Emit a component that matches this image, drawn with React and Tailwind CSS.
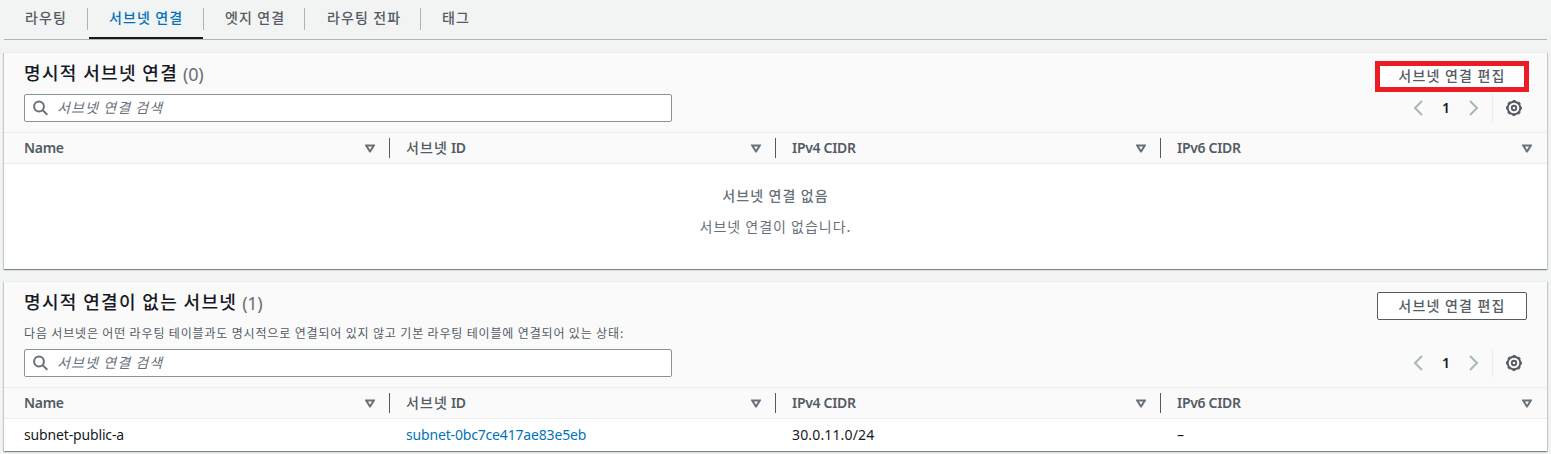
import React from 'react';

const tabs = [
  { label: '라우팅', box: 'w-[84px] pl-[21px]' },
  { label: '서브넷 연결', box: 'w-[116px] pl-[21px]', active: true },
  { label: '엣지 연결', box: 'w-[101px] pl-[21px]' },
  { label: '라우팅 전파', box: 'w-[116px] pl-[22px]' },
  { label: '태그', box: 'w-[70px] pl-[21px]', last: true },
];

const columns = [
  { ko: '', en: 'Name', box: 'w-[386px] pl-5', edge: true },
  { ko: '서브넷', en: 'ID', box: 'w-[386px] pl-4', edge: true },
  { ko: '', en: 'IPv4 CIDR', box: 'w-[385px] pl-4', edge: true },
  { ko: '', en: 'IPv6 CIDR', box: 'w-[386px] pl-4', edge: false },
];

function Tabs() {
  return (
    <nav className="ml-1 flex h-10 w-[1543px] border-b border-[#aab7b8] text-[14px] font-medium tracking-[1.1px] text-[#545b64]">
      {tabs.map((t) => (
        <div key={t.label} className={`relative flex shrink-0 items-start ${t.box}`}>
          <span className={`mt-[7px] leading-[20px] whitespace-nowrap ${t.active ? 'text-[#0073bb]' : ''}`}>{t.label}</span>
          {!t.last && <span className="absolute top-2 right-0 h-[22px] w-px bg-[#aab7b8]" />}
          {t.active && <span className="absolute right-px bottom-0 left-px h-[2px] bg-[#16191f]" />}
        </div>
      ))}
    </nav>
  );
}

function SearchBox() {
  return (
    <div className="flex h-7 w-[648px] items-center rounded-[2px] border border-[#879596] bg-white pl-2">
      <svg width="16" height="16" viewBox="0 0 16 16" fill="none" stroke="#687078" strokeWidth="2">
        <circle cx="6" cy="6.500" r="4.900" />
        <path d="M9.600 10.100 14.300 14.800" />
      </svg>
      <span className="mb-[2px] ml-2 text-[14px] leading-[20px] tracking-[1.1px] text-[#687078] italic">서브넷 연결 검색</span>
    </div>
  );
}

function Pager() {
  return (
    <div className="flex h-7 items-center text-[#aab7b8]">
      <svg width="10" height="16" viewBox="0 0 10 16" fill="none" stroke="currentColor" strokeWidth="2">
        <path d="M9 1 2 8l7 7" />
      </svg>
      <span className="mb-[2px] ml-[18px] w-[10px] text-center font-['Noto_Sans'] text-[14px] font-semibold text-[#16191f]">1</span>
      <svg className="ml-[18px]" width="10" height="16" viewBox="0 0 10 16" fill="none" stroke="currentColor" strokeWidth="2">
        <path d="m1 1 7 7-7 7" />
      </svg>
      <span className="ml-[13px] h-7 w-px bg-[#eaeded]" />
      <svg className="ml-[13px]" width="16" height="16" viewBox="0 0 16 16" fill="none" stroke="#545b64">
        <circle cx="8" cy="8" r="2.200" strokeWidth="1.900" />
        <circle cx="8" cy="8" r="6.300" strokeWidth="1.900" />
        <circle cx="8" cy="8" r="7.400" strokeWidth="1.200" strokeDasharray="3 2.812" strokeDashoffset="1.500" />
      </svg>
    </div>
  );
}

function HeaderRow() {
  return (
    <div className="flex h-[31px] border-b border-[#eaeded] bg-[#fafafa]">
      {columns.map((c) => (
        <div key={c.en} className={`flex shrink-0 items-center ${c.box}`}>
          {c.ko && <span className="mr-[3px] mb-px text-[14px] font-medium tracking-[1.1px] text-[#545b64]">{c.ko}</span>}
          <span className="mb-[2px] font-['Noto_Sans'] text-[14px] font-semibold tracking-[-0.3px] whitespace-nowrap text-[#545b64]">{c.en}</span>
          <svg className={`ml-auto ${c.edge ? 'mr-[14px]' : 'mr-[15px]'}`} width="10" height="9" viewBox="0 0 10 9" fill="#687078">
            <path fillRule="evenodd" d="M0 .5h10v1L5.600 8.500H4.400L0 1.500zM3 2.500 5 5.800l2-3.300z" />
          </svg>
          {c.edge && <span className="h-5 w-px bg-[#545b64]" />}
        </div>
      ))}
    </div>
  );
}

function Panel({ title, count, description, highlighted, className, children }) {
  return (
    <section className={`ml-1 w-[1543px] border-t border-t-[#eaeded] bg-white shadow-[0_1px_1px_0_rgba(0,28,36,0.3),1px_1px_1px_0_rgba(0,28,36,0.15),-1px_1px_1px_0_rgba(0,28,36,0.15)] ${className}`}>
      <header className={`border-b border-[#eaeded] bg-[#fafafa] pl-5 ${description ? 'h-[106px]' : 'h-[80px]'}`}>
        <div className={`flex items-start justify-between ${description ? 'h-[67px]' : 'h-[41px]'}`}>
          <div className="flex flex-col">
            <h2 className="mt-[7px] flex h-6 items-center text-[18px] font-medium tracking-[1.35px] whitespace-nowrap text-[#16191f]">
              {title}
              <span className="mt-1 ml-[5px] font-['Noto_Sans'] text-[18px] font-normal tracking-[-0.3px] text-[#687078]">({count})</span>
            </h2>
            {description && <p className="mt-[11px] text-[12px] leading-[18px] tracking-[0.84px] whitespace-nowrap text-[#545b64]">{description}</p>}
          </div>
          <button
            className={
              highlighted
                ? 'mt-2 mr-[18px] h-[31px] w-[154px] border-[5px] border-[#ed1c24] bg-white pb-[2px] text-[14px] leading-[19px] font-medium tracking-[1.2px] whitespace-nowrap text-[#545b64]'
                : 'mt-[10px] mr-5 h-7 w-[150px] rounded-[2px] border border-[#545b64] bg-white pb-[2px] text-[14px] leading-[20px] font-medium tracking-[1.2px] whitespace-nowrap text-[#545b64]'
            }
          >
            서브넷 연결 편집
          </button>
        </div>
        <div className="flex justify-between pr-[25px]">
          <SearchBox />
          <Pager />
        </div>
      </header>
      <HeaderRow />
      {children}
    </section>
  );
}

export default function App() {
  return (
    <main className="h-[454px] w-[1551px] overflow-hidden bg-[#f2f3f3] font-['Noto_Sans_CJK_KR',sans-serif]">
      <Tabs />
      <Panel title="명시적 서브넷 연결" count={0} highlighted className="mt-3 h-[217px]">
        <div className="flex flex-col items-center text-[14px] leading-[20px] text-[#687078]">
          <p className="mt-[21px] font-medium tracking-[1.1px]">서브넷 연결 없음</p>
          <p className="mt-[11px] tracking-[1px]">서브넷 연결이 없습니다.</p>
        </div>
      </Panel>
      <Panel
        title="명시적 연결이 없는 서브넷"
        count={1}
        description="다음 서브넷은 어떤 라우팅 테이블과도 명시적으로 연결되어 있지 않고 기본 라우팅 테이블에 연결되어 있는 상태:"
        className="mt-3 h-[170px]"
      >
        <div className="flex h-[31px] items-center font-['Noto_Sans'] text-[14px] text-[#16191f]">
          <span className="w-[386px] pl-5 tracking-[-0.15px]">subnet-public-a</span>
          <span className="w-[386px] pl-4 tracking-[-0.17px] text-[#0073bb]">subnet-0bc7ce417ae83e5eb</span>
          <span className="w-[385px] pl-4 tracking-[0.15px]">30.0.11.0/24</span>
          <span className="w-[386px] pl-4">–</span>
        </div>
      </Panel>
    </main>
  );
}
